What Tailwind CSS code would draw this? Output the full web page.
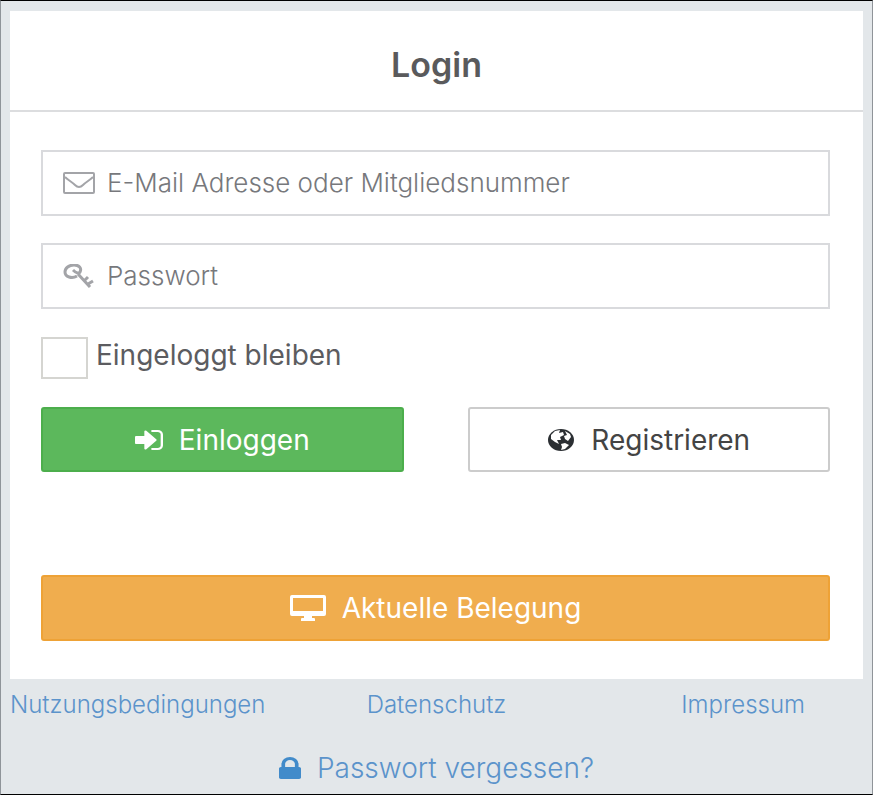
<!DOCTYPE html>
<html lang="de">
<head>
    <meta charset="UTF-8">
    <meta name="viewport" content="width=device-width, initial-scale=1.0">
    <script src="https://cdn.jsdelivr.net/npm/@tailwindcss/browser@4"></script>
    <title>Login</title>
</head>
<body class="min-h-screen flex flex-col bg-[#e3e7ea] border border-x-[#8f9499] border-y-black px-2 pt-[10px] font-['Inter',sans-serif] font-light text-[#5c5c60]">
    <!--Login box-->
    <main class="mx-px bg-white">
        <h1 class="h-[101px] pt-2 flex items-center justify-center border-b-2 border-[#dcdddf] text-[34px] leading-10 font-semibold text-[#5a5a5c]">Login</h1>
        <form class="pl-[31px] pr-[33px] py-[38px] flex flex-col">
            <!--Fields-->
            <label class="h-[66px] mb-[27px] px-5 flex items-center gap-3 border-2 border-[#d9dadd]">
                <svg class="w-8 h-[22px] shrink-0" viewBox="0 0 32 22" fill="none" stroke="#a3a4a8" stroke-width="2" aria-hidden="true">
                    <rect x="1" y="1" width="30" height="20" rx="1"/>
                    <path d="M2 5C5 8 9 10 12 13Q16 17 20 13C23 10 27 8 30 5"/>
                </svg>
                <input type="text" aria-label="E-Mail Adresse oder Mitgliedsnummer" placeholder="E-Mail Adresse oder Mitgliedsnummer" class="w-full text-[26px] leading-8 outline-none placeholder:text-[#77787c]">
            </label>
            <label class="h-[66px] mb-7 px-5 flex items-center gap-3 border-2 border-[#d9dadd]">
                <svg class="w-8 h-6 shrink-0" viewBox="0 0 32 24" fill="none" stroke="#a3a4a8" stroke-width="3" aria-hidden="true">
                    <path d="M14 12C9 15 2 13 2 8C2 4 6 1 11 1C16 1 19 4 17 8C16 10 13 9 10 6"/>
                    <path d="M15 10L27 23M21 17L25 13M25 20L30 17"/>
                </svg>
                <input type="password" aria-label="Passwort" placeholder="Passwort" class="w-full text-[26px] leading-8 outline-none placeholder:text-[#77787c]">
            </label>
            <div class="mb-7 flex items-start gap-2">
                <input type="checkbox" id="remember" class="appearance-none w-[47px] h-[42px] border-2 border-[#d5d5d1] bg-white checked:bg-[#5cb85c]">
                <label for="remember" class="text-[28px] leading-9 font-normal">Eingeloggt bleiben</label>
            </div>
            <!--Buttons-->
            <div class="mb-[103px] grid grid-cols-2 gap-16">
                <button type="submit" class="h-[65px] flex items-center justify-center gap-4 rounded-[3px] border-2 border-[#4cae4c] bg-[#5cb85c] text-[28px] leading-9 font-normal text-white">
                    <svg class="w-7 h-5" viewBox="128 256 1536 1280" preserveAspectRatio="none" fill="currentColor" aria-hidden="true">
                        <path d="M1312 896q0 26-19 45l-544 544q-19 19-45 19t-45-19-19-45v-288h-448q-26 0-45-19t-19-45v-384q0-26 19-45t45-19h448v-288q0-26 19-45t45-19 45 19l544 544q19 19 19 45zm352-352v704q0 119-84.5 203.5t-203.5 84.5h-320q-13 0-22.5-9.5t-9.5-22.5q0-4-1-20t-.5-26.5 3-23.5 10-19.5 20.5-6.5h320q66 0 113-47t47-113v-704q0-66-47-113t-113-47h-312l-11.5-1-11.5-3-8-5.5-7-9-2-13.5q0-4-1-20t-.5-26.5 3-23.5 10-19.5 20.5-6.5h320q119 0 203.5 84.5t84.5 203.5z"/>
                    </svg>
                    Einloggen
                </button>
                <button type="button" class="h-[65px] flex items-center justify-center gap-4 rounded-[3px] border-2 border-[#ccc] bg-white text-[28px] leading-9 font-normal text-[#444]">
                    <svg class="w-7 h-6" viewBox="0 0 28 24" aria-hidden="true">
                        <ellipse cx="14" cy="12" rx="13" ry="11" fill="#2b2f33"/>
                        <path d="M4 7L8 3L13 2L12 5L16 4L17 7L13 9L14 12L10 12L12 16L8 14L4 11Z" fill="#fff"/>
                        <path d="M18 3L23 6L24 9L21 13L18 11L17 8L20 7Z" fill="#fff"/>
                        <path d="M14 16L18 15L22 17L18 21L14 22L15 19Z" fill="#fff"/>
                    </svg>
                    Registrieren
                </button>
            </div>
            <button type="button" class="h-[66px] flex items-center justify-center gap-4 rounded-[3px] border-2 border-[#eea236] bg-[#f0ad4e] text-[28px] leading-9 font-normal text-white">
                <svg class="w-9 h-[26px]" viewBox="0 0 36 26" fill="currentColor" aria-hidden="true">
                    <path fill-rule="evenodd" d="M2 0H34Q36 0 36 2V19Q36 21 34 21H22V23H24Q25 23 25 24V26H11V24Q11 23 12 23H14V21H2Q0 21 0 19V2Q0 0 2 0ZM3 3V16H33V3Z"/>
                </svg>
                Aktuelle Belegung
            </button>
        </form>
    </main>
    <!--Links-->
    <nav class="mx-px pt-2 grid grid-cols-3 text-[24px] leading-9 text-[#5b93cb]">
        <a href="#">Nutzungsbedingungen</a>
        <a href="#" class="text-center">Datenschutz</a>
        <a href="#" class="pr-[58px] text-right">Impressum</a>
    </nav>
    <a href="#" class="mt-[27px] flex items-center justify-center gap-4 text-[28px] leading-9 text-[#5b93cb]">
        <svg class="w-[22px] h-[22px]" viewBox="320 128 1152 1408" preserveAspectRatio="none" fill="#428bca" aria-hidden="true">
            <path d="M640 768h512v-192q0-106-75-181t-181-75-181 75-75 181v192zm832 96v576q0 40-28 68t-68 28h-960q-40 0-68-28t-28-68v-576q0-40 28-68t68-28h32v-192q0-184 132-316t316-132 316 132 132 316v192h32q40 0 68 28t28 68z"/>
        </svg>
        Passwort vergessen?
    </a>
</body>
</html>
